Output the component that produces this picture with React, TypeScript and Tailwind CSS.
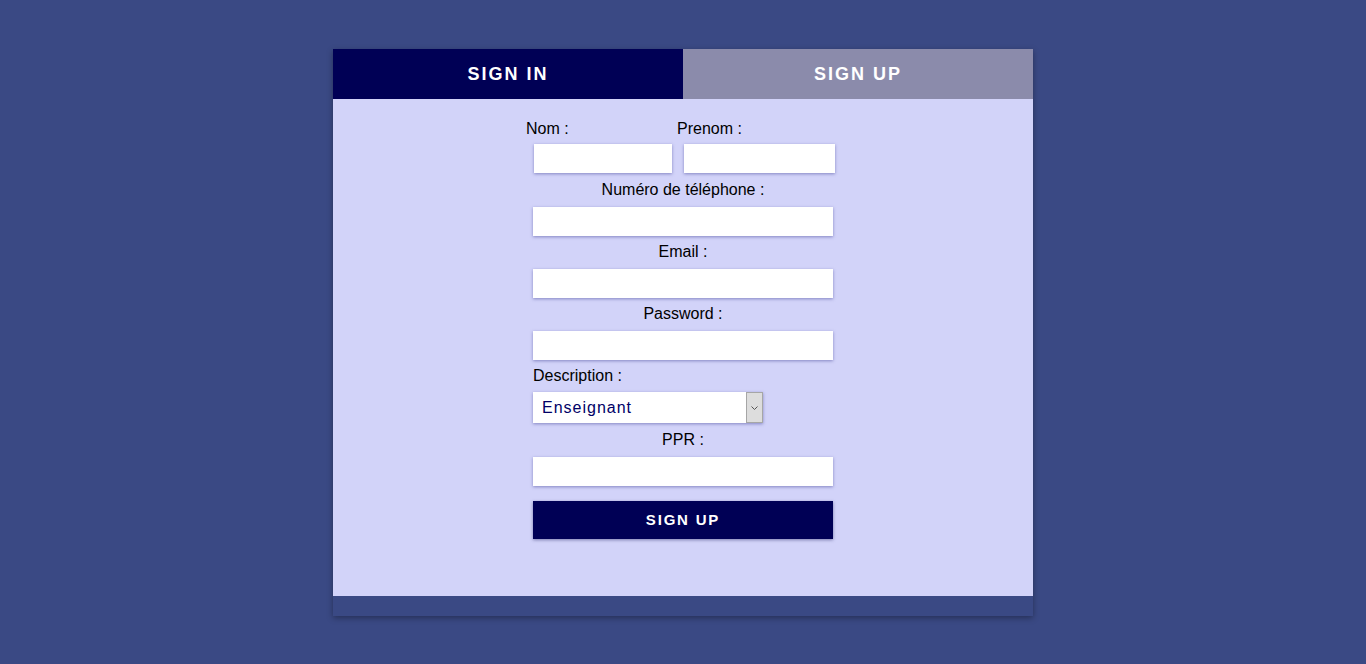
import React, { useState } from 'react';

const font = { fontFamily: '"Liberation Sans", Arial, sans-serif' };

const inputCls =
  'block bg-white h-[29px] outline-none px-2 text-[15px] shadow-[0_1px_3px_rgba(70,70,150,0.55)]';

function Field({ label, type = 'text', gap = 'mt-[7px]' }: { label: string; type?: string; gap?: string }) {
  return (
    <>
      <label className={`block text-center text-[16px] leading-[18px] text-black ${gap}`}>{label}</label>
      <input type={type} className={`${inputCls} w-[300px] mt-[8px]`} />
    </>
  );
}

export default function App() {
  const [tab, setTab] = useState<'in' | 'up'>('in');
  const [role, setRole] = useState('Enseignant');

  return (
    <div className="min-h-screen w-full bg-[#3a4984] pt-[49px]" style={font}>
      <div className="mx-auto w-[700px] bg-[#3a4984] shadow-[0_2px_6px_rgba(0,0,0,0.35)]">
        <div className="flex h-[50px]">
          <button
            onClick={() => setTab('in')}
            className="flex-1 bg-[#000055] text-white font-bold text-[18px] tracking-[2px]"
          >
            SIGN IN
          </button>
          <button
            onClick={() => setTab('up')}
            className="flex-1 bg-[#8b8bab] text-white font-bold text-[18px] tracking-[2px]"
          >
            SIGN UP
          </button>
        </div>

        <div className="h-[497px] bg-[#d2d3f9] pt-[21px]">
          <div className="mx-auto w-[300px]">
            <div className="flex -ml-[7px]">
              <div className="w-[151px] shrink-0">
                <label className="block text-[16px] leading-[18px] text-black">Nom :</label>
                <input type="text" className={`${inputCls} w-[138px] ml-[8px] mt-[6px]`} />
              </div>
              <div className="w-[158px] shrink-0">
                <label className="block text-[16px] leading-[18px] text-black">Prenom :</label>
                <input type="text" className={`${inputCls} w-[151px] ml-[7px] mt-[6px]`} />
              </div>
            </div>

            <Field label="Numéro de téléphone :" type="tel" gap="mt-[8px]" />
            <Field label="Email :" type="email" />
            <Field label="Password :" type="password" />

            <label className="block text-[16px] leading-[18px] text-black mt-[7px]">Description :</label>
            <div className="relative mt-[7px] w-[230px] h-[31px] shadow-[0_1px_3px_rgba(70,70,150,0.55)]">
              <select
                value={role}
                onChange={e => setRole(e.target.value)}
                className="appearance-none w-full h-full bg-white pl-[9px] pr-[20px] text-[16px] tracking-[1px] text-[#000066] outline-none"
                style={font}
              >
                <option>Enseignant</option>
                <option>Etudiant</option>
              </select>
              <div className="absolute right-0 top-0 h-full w-[17px] bg-[#dddddd] border border-[#a6a6a6] flex items-center justify-center pointer-events-none">
                <svg width="7" height="4" viewBox="0 0 7 4">
                  <path d="M0.5 0.5 L3.5 3.5 L6.5 0.5" fill="none" stroke="#555" strokeWidth="1" />
                </svg>
              </div>
            </div>

            <Field label="PPR :" gap="mt-[8px]" />

            <button className="block mt-[15px] w-[300px] h-[38px] bg-[#000055] text-white font-bold text-[15px] tracking-[1.8px] shadow-[0_1px_3px_rgba(40,40,100,0.5)]">
              SIGN UP
            </button>
          </div>
        </div>
        <div className="h-[20px]" />
      </div>
    </div>
  );
}
